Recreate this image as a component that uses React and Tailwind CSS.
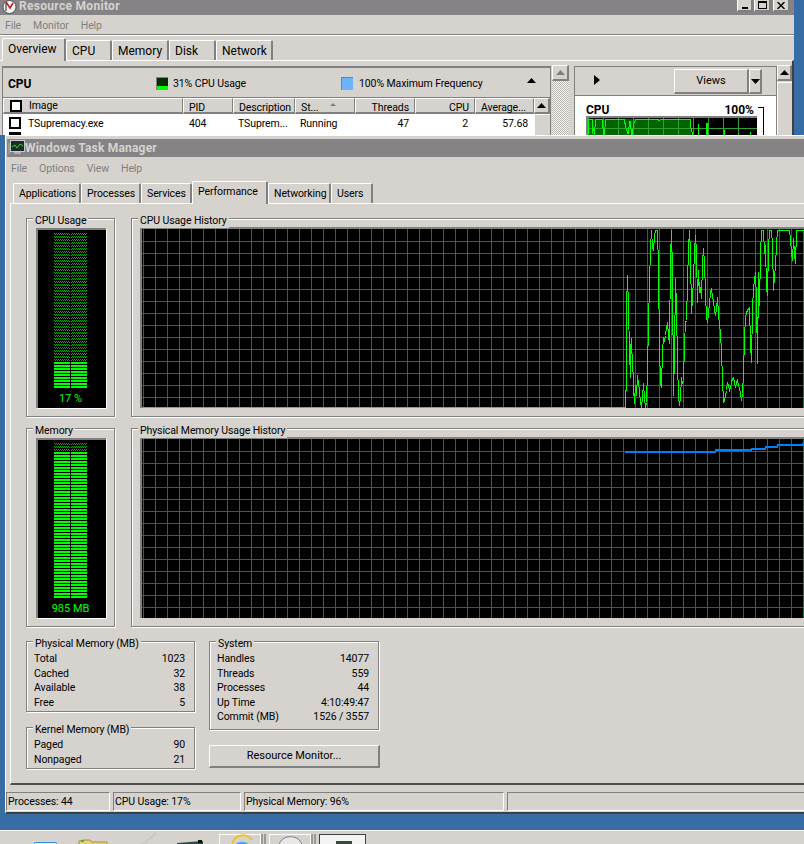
import React from 'react';

const FONT = "font-['Roboto',sans-serif]";
const LABEL = 'text-[10.5px] tracking-[-0.1px]';

// trace read off the screen, x = 600 + a/3, y = 220 + b/3
const CPU_TRACE = [[0,562],[72,562],[74,462],[76,265],[79,165],[81,262],[83,395],[86,470],[88,390],[90,355],[92,445],[94,405],[96,500],[98,548],[100,540],[103,495],[106,525],[109,465],[112,490],[115,510],[118,545],[121,560],[124,530],[127,490],[130,530],[133,560],[136,545],[139,450],[142,310],[145,190],[148,85],[151,30],[154,80],[157,90],[160,45],[163,30],[169,30],[171,145],[174,380],[177,490],[181,500],[184,390],[187,350],[190,360],[193,345],[196,320],[199,305],[202,345],[205,370],[208,115],[211,30],[214,155],[216,525],[219,400],[222,175],[225,262],[228,430],[231,525],[234,555],[237,530],[240,470],[243,490],[246,480],[249,370],[252,305],[255,300],[258,185],[261,85],[264,30],[267,95],[270,280],[273,235],[276,175],[279,90],[283,45],[286,95],[289,245],[292,150],[295,215],[298,200],[301,235],[304,125],[307,85],[310,125],[313,220],[316,290],[319,305],[322,280],[325,250],[328,215],[331,205],[334,230],[337,240],[340,270],[343,285],[346,265],[349,230],[352,280],[355,315],[358,335],[361,395],[364,475],[367,547],[370,540],[373,525],[376,510],[379,485],[382,495],[385,510],[388,500],[391,485],[394,475],[397,470],[400,485],[403,500],[406,485],[409,480],[412,495],[415,505],[418,520],[421,540],[424,520],[427,460],[430,350],[433,290],[436,275],[439,270],[442,265],[445,260],[448,370],[451,425],[454,265],[457,200],[460,180],[463,155],[466,240],[469,430],[472,155],[475,255],[478,100],[481,30],[487,30],[490,100],[493,75],[496,200],[499,225],[502,80],[505,30],[511,30],[514,75],[517,210],[520,165],[523,140],[526,70],[529,30],[564,30],[567,55],[570,95],[573,120],[576,55],[579,100],[582,130],[585,30],[612,30]];

const MEM_TRACE = '624,452 714,452 715,450 750,450 751,449 764,449 765,447 776,447 777,445 801,445 803,443 804,443';

function GridLines({ y0, y1, first }) {
  const vs = [];
  for (let x = 142; x < 804; x += 12) vs.push(x);
  const hs = [];
  for (let y = first; y < y1; y += 12) hs.push(y);
  return (
    <g fill="#008040">
      {vs.map(x => <rect key={x} x={x} y={y0} width="1" height={y1 - y0} />)}
      {hs.map(y => <rect key={y} x={141} y={y} width="663" height="1" />)}
    </g>
  );
}

function CpuGraph() {
  const pts = CPU_TRACE.map(([a, b]) => `${Math.round(600 + a / 3) + 0.5},${Math.round(220 + b / 3) + 0.5}`).join(' ');
  return (
    <svg width="663" height="179" viewBox="141 229 663 179" className="block bg-black" shapeRendering="crispEdges">
      <GridLines y0={229} y1={408} first={241} />
      <rect x="141" y="407" width="483" height="1" fill="#00ff00" />
      <polyline points={pts} fill="none" stroke="#00ff00" strokeWidth="1" />
    </svg>
  );
}

function MemGraph() {
  return (
    <svg width="663" height="179" viewBox="141 439 663 179" className="block bg-black" shapeRendering="crispEdges">
      <GridLines y0={439} y1={618} first={451} />
      <polyline points={MEM_TRACE} fill="none" stroke="#0080ff" strokeWidth="2" />
    </svg>
  );
}

function Meter({ id, lit, label }) {
  const rows = [];
  for (let i = 0; i < 52; i++) rows.push(i);
  return (
    <div className="w-[70px] h-[180px] bg-black border-t-2 border-l-2 border-[#808080] shadow-[1px_1px_0_#fff] flex flex-col items-center">
      <svg width="33" height="156" viewBox="0 0 33 156" className="mt-[3px] mr-[4px] block" shapeRendering="crispEdges">
        <defs>
          <pattern id={id} width="2" height="3" patternUnits="userSpaceOnUse">
            <rect x="0" y="0" width="1" height="1" fill="#00b000" />
            <rect x="1" y="1" width="1" height="1" fill="#00b000" />
          </pattern>
        </defs>
        {rows.map(i => {
          const on = i >= 52 - lit;
          const fill = on ? '#00ff00' : `url(#${id})`;
          return (
            <g key={i}>
              <rect x="0" y={i * 3} width="16" height="2" fill={fill} />
              <rect x="17" y={i * 3} width="16" height="2" fill={fill} />
            </g>
          );
        })}
      </svg>
      <div className="text-[11px] leading-[14px] text-[#00ff00] mt-[3px] mr-[3px]">{label}</div>
    </div>
  );
}

function GroupBox({ title, className, children }) {
  return (
    <div className={`relative border border-[#808080] shadow-[inset_1px_1px_0_#fff,1px_1px_0_#fff] ${className}`}>
      <span className={`absolute left-[6px] top-[-5px] px-[2px] bg-[#d6d3ce] leading-[14px] whitespace-nowrap ${LABEL}`}>{title}</span>
      {children}
    </div>
  );
}

function StatRows({ rows }) {
  return (
    <div className="flex flex-col pl-[7px] pr-[9px] pt-[10px]">
      {rows.map(([k, v]) => (
        <div key={k} className={`flex justify-between leading-[14.5px] h-[14.5px] ${LABEL}`}>
          <span>{k}</span>
          <span>{v}</span>
        </div>
      ))}
    </div>
  );
}

function Tab({ label, active, w, big }) {
  return (
    <div
      style={{ width: w }}
      className={`flex items-center pl-[5px] border-l border-t border-white border-r-2 border-r-[#808080] rounded-t-[2px] ${big ? 'text-[12px]' : LABEL} ${
        active ? 'h-[23px] leading-[20px] z-10 bg-[#d6d3ce] -mb-px pb-[2px]' : 'h-[20px] leading-[18px] pt-px'
      }`}
    >
      {label}
    </div>
  );
}

function Tri({ dir = 'up', gray }) {
  const color = gray ? '#808080' : '#000';
  const pts = dir === 'up' ? '0,5 9,5 4.5,0' : dir === 'down' ? '0,0 9,0 4.5,5' : '0,0 0,10 6,5';
  return (
    <svg width={dir === 'right' ? 6 : 9} height={dir === 'right' ? 10 : 5} className="block">
      <polygon points={pts} fill={color} />
    </svg>
  );
}

function Bevel({ className, children }) {
  return (
    <div className={`flex items-center justify-center border-l border-t border-white border-r-2 border-b-2 border-r-[#808080] border-b-[#808080] ${className}`}>
      {children}
    </div>
  );
}

function HeaderCell({ w, align = 'text-left', children }) {
  return (
    <div
      style={{ width: w }}
      className={`h-[16px] shrink-0 px-[5px] leading-[15px] pt-px whitespace-nowrap border-l border-t border-white border-r border-b-2 border-r-[#808080] border-b-[#808080] ${LABEL} ${align}`}
    >
      {children}
    </div>
  );
}

function ResMonIcon() {
  return (
    <svg width="15" height="15" viewBox="0 0 15 15" className="block">
      <circle cx="7.5" cy="7" r="6.5" fill="#f4f4f4" stroke="#555" />
      <path d="M4 2 L8 8 L11 3" fill="none" stroke="#c02020" strokeWidth="1.6" />
      <path d="M4 3 L4 11" stroke="#222" strokeWidth="1" />
    </svg>
  );
}

function TaskIcon() {
  return (
    <svg width="17" height="16" viewBox="0 0 17 16" className="block">
      <rect x="2.5" y="0.5" width="14" height="11" fill="#1c2a2a" stroke="#c8c8c8" />
      <path d="M4 7 L7 5 L9 8 L12 4 L15 6" fill="none" stroke="#20e020" />
      <rect x="6" y="12" width="7" height="2" fill="#b0b0b0" />
      <rect x="0" y="3" width="2" height="11" fill="#9a9a9a" />
    </svg>
  );
}

function MiniCpuChart() {
  return (
    <svg width="171" height="20" viewBox="0 0 171 20" className="block bg-black" shapeRendering="crispEdges">
      <rect x="2" y="3" width="103" height="17" fill="#006400" />
      <g fill="#2f9f2f">
        {[2, 17, 32, 47, 62, 77, 92, 107, 122, 137, 152].map(x => (
          <rect key={x} x={x} y="2" width="1" height="18" />
        ))}
        <rect x="2" y="12" width="169" height="1" />
      </g>
      <polyline
        points="2,20 3,3 6,3 6,18 8,12 8,20 10,3 16,3 17,12 18,20 20,3 38,3 40,12 42,18 44,5 46,20 48,7 50,3 72,3 73,5 75,3 104,3 105,12 107,20 112,20 112,8 113,20 120,20 121,7 122,20 138,20 138,14 139,20 164,20 164,16 165,20"
        fill="none"
        stroke="#00ff00"
      />
      <rect x="0" y="0" width="171" height="2" fill="#808080" />
      <rect x="0" y="0" width="2" height="20" fill="#808080" />
    </svg>
  );
}

function ResourceMonitor() {
  return (
    <div className="absolute left-0 top-0 w-[794px] h-[135px] overflow-hidden bg-[#d6d3ce] flex flex-col">
      {/* title */}
      <div className="h-[15px] shrink-0 bg-[#858385] flex items-start pl-[2px] relative">
        <ResMonIcon />
        <span className="ml-[2px] text-[12px] font-bold tracking-[0.3px] text-[#d6d3ce] leading-[13px]">Resource Monitor</span>
        <div className="absolute right-[4px] -top-[1px] flex gap-px">
          <Bevel className="w-[16px] h-[13px] bg-[#d6d3ce]"><div className="w-[6px] h-[2px] bg-black mt-[6px]" /></Bevel>
          <Bevel className="w-[17px] h-[13px] bg-[#d6d3ce]"><div className="w-[9px] h-[8px] border border-black border-t-2" /></Bevel>
          <Bevel className="w-[17px] h-[13px] bg-[#d6d3ce] ml-[1px]">
            <svg width="8" height="7" viewBox="0 0 8 7" className="block">
              <path d="M0.5 0 L7.5 7 M7.5 0 L0.5 7" stroke="#000" strokeWidth="1.4" />
            </svg>
          </Bevel>
        </div>
      </div>
      {/* menu */}
      <div className={`h-[20px] shrink-0 flex items-center gap-[12px] pl-[5px] pt-[2px] text-[#808080] border-b border-[#808080] shadow-[0_1px_0_#fff] ${LABEL}`}>
        <span>File</span><span>Monitor</span><span>Help</span>
      </div>
      {/* tabs */}
      <div className="h-[25px] shrink-0 flex items-end pl-[2px]">
        <Tab label="Overview" active big w={64} />
        <Tab label="CPU" big w={46} />
        <Tab label="Memory" big w={57} />
        <Tab label="Disk" big w={47} />
        <Tab label="Network" big w={57} />
      </div>
      {/* body */}
      <div className="flex-1 flex border-t border-white border-r-2 border-r-[#404040] pt-[5px] pl-[2px] pr-[1px] min-h-0">
        <div className="w-[549px] shrink-0 border-t-2 border-l border-r border-[#808080] flex flex-col">
          <div className={`h-[29px] shrink-0 flex items-center pl-[5px] pt-[2px] relative ${LABEL}`}>
            <span className="text-[12px] tracking-normal font-bold w-[148px]">CPU</span>
            <div className="w-[12px] h-[13px] bg-[#003000] border-l border-t border-[#808080] flex flex-col justify-end">
              <div className="h-[4px] bg-[#00ff00]" />
            </div>
            <span className="ml-[5px] w-[168px]">31% CPU Usage</span>
            <div className="w-[12px] h-[13px] bg-[#6cb4fa] border-l border-t border-[#808080]" />
            <span className="ml-[6px]">100% Maximum Frequency</span>
            <div className="absolute left-[524px] top-[10px]"><Tri /></div>
          </div>
          <div className="flex shrink-0 border-t border-[#808080]">
            <div className={`w-[180px] h-[16px] shrink-0 flex items-center pl-[6px] border-l border-t border-white border-r border-b-2 border-r-[#808080] border-b-[#808080] ${LABEL}`}>
              <div className="w-[12px] h-[12px] bg-white border-2 border-black" />
              <span className="ml-[7px]">Image</span>
            </div>
            <HeaderCell w={50}>PID</HeaderCell>
            <HeaderCell w={62}>Description</HeaderCell>
            <div className="w-[60px] h-[16px] shrink-0 relative">
              <HeaderCell w={60}>St...</HeaderCell>
              <div className="absolute left-[35px] top-[5px] w-0 h-0 border-x-[3px] border-x-transparent border-b-[3px] border-b-[#808080]" />
            </div>
            <HeaderCell w={60} align="text-right">Threads</HeaderCell>
            <HeaderCell w={60} align="text-right">CPU</HeaderCell>
            <HeaderCell w={59}>Average...</HeaderCell>
            <Bevel className="w-[16px] h-[16px] bg-[#d6d3ce]"><Tri /></Bevel>
          </div>
          <div className={`flex-1 flex bg-white relative ${LABEL}`}>
            <div className="w-[180px] pl-[6px] pt-[3px] flex items-start shrink-0">
              <div className="w-[12px] h-[12px] border-2 border-black" />
              <span className="ml-[7px] leading-[13px]">TSupremacy.exe</span>
            </div>
            <span className="w-[50px] pl-[6px] pt-[3px] leading-[13px]">404</span>
            <span className="w-[62px] pl-[5px] pt-[3px] leading-[13px]">TSuprem...</span>
            <span className="w-[60px] pl-[5px] pt-[3px] leading-[13px]">Running</span>
            <span className="w-[60px] pr-[6px] pt-[3px] leading-[13px] text-right">47</span>
            <span className="w-[60px] pr-[7px] pt-[3px] leading-[13px] text-right">2</span>
            <span className="w-[59px] pr-[6px] pt-[3px] leading-[13px] text-right">57.68</span>
            <div className="w-[16px] bg-[#d6d3ce] border-l border-t border-white" />
            <div className="absolute left-[6px] top-[18px] w-[12px] h-[3px] bg-black" />
          </div>
        </div>
        <div className="w-[17px] ml-[1px] shrink-0 flex flex-col -mt-[1px]">
          <Bevel className="h-[16px] bg-[#d6d3ce]"><Tri gray /></Bevel>
          <div className="flex-1 bg-[repeating-conic-gradient(#c0bdb8_0_25%,#f2f0ec_0_50%)] bg-size-[2px_2px]" />
        </div>
        <div className="w-[203px] ml-[5px] shrink-0 border-t border-l border-[#808080] flex flex-col border-r">
          <div className="h-[29px] shrink-0 border-b border-[#808080] flex items-center relative">
            <div className="absolute left-[19px] top-[8px]"><Tri dir="right" /></div>
            <Bevel className="absolute left-[99px] top-[2px] w-[75px] h-[25px] text-[11px] pt-[1px]">Views</Bevel>
            <Bevel className="absolute left-[174px] top-[2px] w-[13px] h-[25px]"><Tri dir="down" /></Bevel>
          </div>
          <div className="flex-1 bg-white relative pl-[11px] pt-[7px]">
            <div className="flex w-[168px] justify-between text-[12px] font-bold leading-[14px] h-[13px]">
              <span>CPU</span><span>100%</span>
            </div>
            <MiniCpuChart />
            <div className="absolute left-[183px] top-[11px] w-[6px] h-[30px] border-t border-r border-black" />
          </div>
        </div>
        <div className="w-[15px] shrink-0 flex flex-col -mt-[1px] bg-[#d6d3ce]">
          <Bevel className="h-[16px]"><Tri /></Bevel>
          <div className="flex-1 border-l border-t border-white mt-px" />
        </div>
      </div>
    </div>
  );
}

function TaskManager() {
  const tabs = [['Applications', 68], ['Processes', 60], ['Services', 51], ['Performance', 76, true], ['Networking', 63], ['Users', 42]];
  return (
    <div className="absolute left-[5px] top-[135px] w-[799px] h-[679px] overflow-hidden bg-[#d6d3ce] border-l border-t border-white border-b-2 border-b-[#404040] flex flex-col">
      <div className="h-[18px] mt-[3px] shrink-0 ml-px bg-[#858385] flex items-center pl-[1px]">
        <TaskIcon />
        <span className="text-[12px] font-bold tracking-[0.2px] text-[#d6d3ce] leading-[14px]">Windows Task Manager</span>
      </div>
      <div className={`h-[21px] shrink-0 flex items-center gap-[12px] pl-[5px] pt-[2px] text-[#808080] ${LABEL}`}>
        <span>File</span><span>Options</span><span>View</span><span>Help</span>
      </div>
      <div className="h-[25px] shrink-0 flex items-end pl-[7px]">
        {tabs.map(([l, w, a]) => <Tab key={l} label={l} w={w} active={a} />)}
      </div>
      <div className="h-[582px] shrink-0 ml-[4px] border-l border-t border-white border-b-2 border-b-[#505050] pl-[15px] pt-[14px]">
        <div className="flex gap-[16px] h-[199px]">
          <GroupBox title="CPU Usage" className="w-[89px] shrink-0 pl-[9px] pt-[9px]">
            <Meter id="cpu-dim" lit={9} label="17 %" />
          </GroupBox>
          <GroupBox title="CPU Usage History" className="w-[720px] shrink-0 pl-[9px] pt-[9px]">
            <div className="border-t-2 border-l-2 border-[#808080] -mt-[1px] -ml-[1px]"><CpuGraph /></div>
          </GroupBox>
        </div>
        <div className="flex gap-[16px] h-[199px] mt-[11px]">
          <GroupBox title="Memory" className="w-[89px] shrink-0 pl-[9px] pt-[9px]">
            <Meter id="mem-dim" lit={49} label="985 MB" />
          </GroupBox>
          <GroupBox title="Physical Memory Usage History" className="w-[720px] shrink-0 pl-[9px] pt-[9px]">
            <div className="border-t-2 border-l-2 border-[#808080] -mt-[1px] -ml-[1px]"><MemGraph /></div>
          </GroupBox>
        </div>
        <div className="flex gap-[14px] mt-[14px]">
          <div className="w-[169px] flex flex-col gap-[15px]">
            <GroupBox title="Physical Memory (MB)" className="h-[71px]">
              <StatRows rows={[['Total', '1023'], ['Cached', '32'], ['Available', '38'], ['Free', '5']]} />
            </GroupBox>
            <GroupBox title="Kernel Memory (MB)" className="h-[42px]">
              <StatRows rows={[['Paged', '90'], ['Nonpaged', '21']]} />
            </GroupBox>
          </div>
          <div className="w-[170px] flex flex-col gap-[15px]">
            <GroupBox title="System" className="h-[89px]">
              <StatRows rows={[['Handles', '14077'], ['Threads', '559'], ['Processes', '44'], ['Up Time', '4:10:49:47'], ['Commit (MB)', '1526 / 3557']]} />
            </GroupBox>
            <Bevel className="h-[23px] w-[171px] text-[11px]">Resource Monitor...</Bevel>
          </div>
        </div>
      </div>
      <div className={`flex mt-[7px] gap-[3px] h-[19px] leading-[17px] ${LABEL}`}>
        {[['Processes: 44', 104], ['CPU Usage: 17%', 128], ['Physical Memory: 96%', 260], ['', 310]].map(([t, w]) => (
          <div key={w} style={{ width: w }} className="shrink-0 pl-px border-t border-l border-[#808080] border-r border-r-white border-b border-b-white whitespace-nowrap">{t}</div>
        ))}
      </div>
    </div>
  );
}

function Taskbar() {
  return (
    <div className="absolute left-0 right-0 top-[830px] h-[14px] bg-[#d6d3ce] border-t border-white overflow-hidden">
      <svg width="804" height="13" viewBox="0 831 804 13" className="block">
        <rect x="34" y="842" width="23" height="4" rx="2" fill="#2f8fd8" />
        <rect x="35" y="843" width="21" height="3" fill="#dff0fa" />
        <path d="M79 841 L84 840 L90 840 L92 842 L107 842 L107 846 L79 846 Z" fill="#e6cf7a" stroke="#a8903c" />
        <rect x="81" y="840" width="3" height="2" fill="#20c040" />
        <path d="M138 846 L146 842 L156 833" fill="none" stroke="#c8c8c8" strokeWidth="2" />
        <path d="M177 843 L203 841 L203 846 L177 846 Z" fill="#2a4a4a" />
        <rect x="198" y="840" width="4" height="3" fill="#111" />
        <rect x="219.5" y="834.5" width="41" height="12" fill="#d6d3ce" stroke="#fff" />
        <path d="M232 846 A11 11 0 0 1 252 840" fill="none" stroke="#f0c020" strokeWidth="2" />
        <path d="M234 846 A9 8 0 0 1 250 846" fill="#4aa8e8" />
        <path d="M262 834 V846 M265 834 V846" stroke="#606060" />
        <rect x="269.5" y="834.5" width="41" height="12" fill="#d6d3ce" stroke="#fff" />
        <path d="M279 846 A11 9 0 0 1 302 846" fill="#e8e8e8" stroke="#808080" />
        <path d="M312 834 V846 M315 834 V846" stroke="#606060" />
        <rect x="319.5" y="834.5" width="46" height="12" fill="#f4f4f4" stroke="#404040" />
        <path d="M336 841 H352 V846 H336 Z" fill="#3a4a3a" />
      </svg>
    </div>
  );
}

export default function App() {
  return (
    <div className={`relative w-[804px] h-[844px] overflow-hidden bg-[#386ca4] text-black ${FONT}`}>
      <ResourceMonitor />
      <TaskManager />
      <Taskbar />
    </div>
  );
}
